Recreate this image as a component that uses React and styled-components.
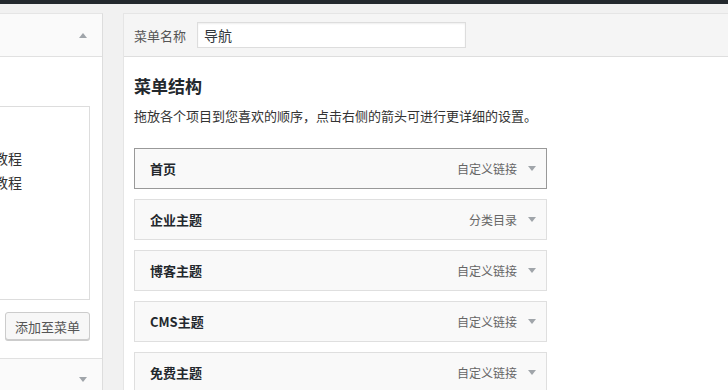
import styled, { createGlobalStyle } from "styled-components";

const GlobalStyle = createGlobalStyle`
  html, body {
    margin: 0;
    padding: 0;
    background: #f1f1f1;
    overflow: hidden;
  }
  body {
    font-family: "Noto Sans CJK SC", "Noto Sans", "Liberation Sans", sans-serif;
    font-size: 13px;
    color: #444;
  }
`;

const menuItems = [
  { title: "首页", type: "自定义链接", active: true },
  { title: "企业主题", type: "分类目录" },
  { title: "博客主题", type: "自定义链接" },
  { title: "CMS主题", type: "自定义链接" },
  { title: "免费主题", type: "自定义链接" },
];

function Arrow({ up }) {
  return (
    <svg width="10" height="8" viewBox="0 0 10 8">
      <path d={up ? "M1 7 L5 2 L9 7 Z" : "M1 1 L9 1 L5 6 Z"} fill="#a0a5aa" />
    </svg>
  );
}

export default function App() {
  return (
    <>
      <GlobalStyle />
      <AdminBar />
      <Wrap>
        <Sidebar>
          <SectionHead>
            <Arrow up />
          </SectionHead>
          <SectionBody>
            <CheckList>
              <li>主题教程</li>
              <li>建站教程</li>
            </CheckList>
            <ButtonRow>
              <Button>添加至菜单</Button>
            </ButtonRow>
          </SectionBody>
          <SectionHead>
            <Arrow />
          </SectionHead>
        </Sidebar>
        <Editor>
          <EditorHead>
            <Label>菜单名称</Label>
            <NameInput defaultValue="导航" />
          </EditorHead>
          <EditorBody>
            <Title>菜单结构</Title>
            <Desc>拖放各个项目到您喜欢的顺序，点击右侧的箭头可进行更详细的设置。</Desc>
            <ItemList>
              {menuItems.map((item) => (
                <Item key={item.title} $active={item.active}>
                  <ItemTitle>{item.title}</ItemTitle>
                  <ItemType>{item.type}</ItemType>
                  <Toggle>
                    <Arrow />
                  </Toggle>
                </Item>
              ))}
            </ItemList>
          </EditorBody>
        </Editor>
      </Wrap>
    </>
  );
}

const AdminBar = styled.div`
  height: 4px;
  background: #23282d;
`;

const Wrap = styled.div`
  display: flex;
  align-items: flex-start;
  gap: 20px;
  padding-top: 9px;
`;

const Sidebar = styled.div`
  flex: none;
  width: 159px;
  margin-left: -56px;
  background: #fff;
  border: 1px solid #e5e5e5;
  border-right-color: #ddd;
  box-sizing: border-box;
`;

const SectionHead = styled.div`
  height: 42px;
  display: flex;
  align-items: center;
  justify-content: flex-end;
  padding-right: 14px;
  background: #fafafa;
  border-bottom: 1px solid #e1e1e1;
  &:last-child {
    border-bottom: none;
  }
`;

const SectionBody = styled.div`
  padding: 49px 12px 18px 10px;
  border-bottom: 1px solid #e1e1e1;
`;

const CheckList = styled.ul`
  list-style: none;
  margin: 0;
  padding: 39px 10px 0;
  height: 153px;
  border: 1px solid #ddd;
  background: #fff;
  li {
    line-height: 24px;
    font-size: 14px;
    color: #333;
    white-space: nowrap;
  }
`;

const ButtonRow = styled.div`
  display: flex;
  justify-content: flex-end;
  margin-top: 12px;
`;

const Button = styled.button`
  height: 28px;
  padding: 0 9px;
  font: inherit;
  font-size: 13px;
  color: #555;
  background: #f7f7f7;
  border: 1px solid #ccc;
  border-radius: 3px;
  box-shadow: 0 1px 0 #ccc;
`;

const Editor = styled.div`
  flex: 1;
  min-width: 0;
  background: #fff;
  border: 1px solid #e5e5e5;
  border-right: none;
  min-height: 420px;
`;

const EditorHead = styled.div`
  height: 42px;
  display: flex;
  align-items: center;
  gap: 11px;
  padding: 0 10px;
  background: #f5f5f5;
  border-bottom: 1px solid #dedede;
`;

const Label = styled.span`
  font-size: 13px;
  color: #555;
`;

const NameInput = styled.input`
  width: 269px;
  height: 26px;
  box-sizing: border-box;
  padding: 0 6px;
  font: inherit;
  font-size: 14px;
  color: #32373c;
  background: #fff;
  border: 1px solid #ddd;
  box-shadow: inset 0 1px 2px rgba(0, 0, 0, 0.07);
  outline: none;
`;

const EditorBody = styled.div`
  padding: 0 10px;
`;

const Title = styled.h3`
  margin: 19px 0 0;
  font-size: 17px;
  line-height: 20px;
  font-weight: 700;
  color: #23282d;
`;

const Desc = styled.p`
  margin: 10px 0 0;
  font-size: 13px;
  line-height: 20px;
  color: #333;
`;

const ItemList = styled.ul`
  list-style: none;
  margin: 22px 0 0;
  padding: 0;
  width: 413px;
  display: flex;
  flex-direction: column;
  gap: 10px;
`;

const Item = styled.li`
  height: 41px;
  box-sizing: border-box;
  display: flex;
  align-items: center;
  padding: 0 8px 0 15px;
  background: #f9f9f9;
  border: 1px solid ${(p) => (p.$active ? "#999" : "#dfdfdf")};
`;

const ItemTitle = styled.span`
  flex: 1;
  font-size: 13px;
  font-weight: 600;
  color: #23282d;
`;

const ItemType = styled.span`
  font-size: 12px;
  color: #666;
`;

const Toggle = styled.span`
  display: flex;
  width: 10px;
  margin-left: 10px;
  margin-right: 1px;
`;
